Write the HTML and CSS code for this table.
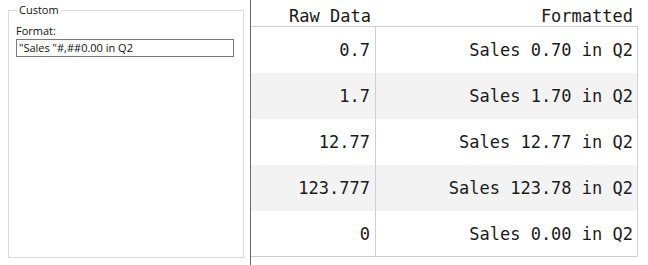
FILE: index.html
```html
<!DOCTYPE html>
<html>
<head>
<meta charset="utf-8">
<link rel="stylesheet" href="styles.css">
</head>
<body>
<div class="app">
  <div class="left">
    <fieldset class="group">
      <legend class="legend">Custom</legend>
      <div class="label">Format:</div>
      <div class="input">"Sales "#,##0.00 in Q2</div>
    </fieldset>
  </div>
  <div class="divider"></div>
  <div class="grid">
    <div class="head">
      <div class="c1">Raw Data</div>
      <div class="c2">Formatted</div>
    </div>
    <div class="body">
      <div class="row"><div class="c1">0.7</div><div class="c2">Sales 0.70 in Q2</div></div>
      <div class="row alt"><div class="c1">1.7</div><div class="c2">Sales 1.70 in Q2</div></div>
      <div class="row"><div class="c1">12.77</div><div class="c2">Sales 12.77 in Q2</div></div>
      <div class="row alt"><div class="c1">123.777</div><div class="c2">Sales 123.78 in Q2</div></div>
      <div class="row"><div class="c1">0</div><div class="c2">Sales 0.00 in Q2</div></div>
    </div>
  </div>
</div>
</body>
</html>
```
FILE: styles.css
```css
html, body {
  margin: 0;
  padding: 0;
  background: #ffffff;
}
.app {
  display: flex;
  width: 648px;
  height: 265px;
  overflow: hidden;
}
.left {
  width: 250px;
  box-sizing: border-box;
  padding: 2px 0 7px 8px;
  display: flex;
  flex-direction: column;
}
.group {
  margin: 0;
  width: 236px;
  box-sizing: border-box;
  flex: 1;
  border: 1px solid #dcdcdc;
  padding: 2px 9px 0 7px;
  font-family: "Open Sans", "Noto Sans", sans-serif;
  font-size: 11px;
  color: #111111;
}
.legend {
  padding: 0 2px;
  line-height: 16px;
  margin-left: 1px;
}
.label {
  line-height: 14px;
  margin-top: 4px;
  margin-bottom: 1px;
}
.input {
  height: 18px;
  box-sizing: border-box;
  border: 1px solid #7a7a7a;
  padding: 0 2px;
  line-height: 16px;
  white-space: nowrap;
}
.divider {
  width: 1px;
  background: #6a6a6a;
}
.grid {
  width: 387px;
  font-family: "DejaVu Sans Mono", "Liberation Mono", monospace;
  font-size: 17px;
  color: #1a1a1a;
  display: flex;
  flex-direction: column;
}
.head {
  display: grid;
  grid-template-columns: 125px 1fr;
  height: 26px;
  box-sizing: border-box;
  padding-top: 6px;
  line-height: 20px;
}
.head .c1 {
  text-align: right;
  padding-right: 5px;
}
.head .c2 {
  text-align: right;
  padding-right: 5px;
}
.body {
  border-top: 1px solid #d0d0d0;
  border-right: 1px solid #d0d0d0;
  border-bottom: 1px solid #d0d0d0;
}
.row {
  display: grid;
  grid-template-columns: 125px 1fr;
  height: 46px;
  align-items: center;
}
.row:last-child {
  height: 45px;
}
.row.alt {
  background: #f3f3f3;
}
.row .c1 {
  padding-right: 5px;
  border-right: 1px solid #d0d0d0;
  height: 100%;
  display: flex;
  align-items: center;
  justify-content: flex-end;
}
.row .c2 {
  text-align: right;
  padding-right: 4px;
}
```
